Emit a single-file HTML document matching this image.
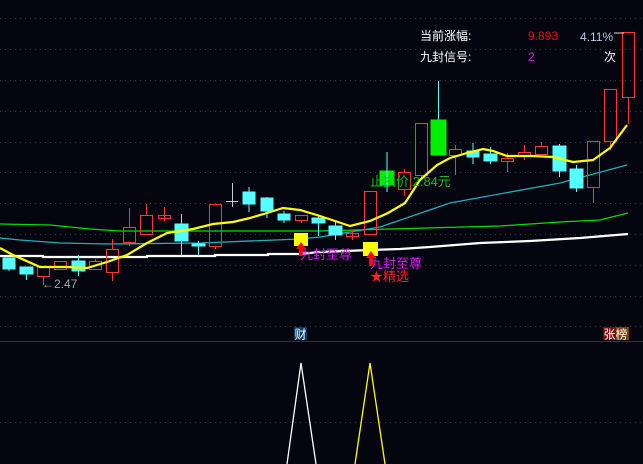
<!DOCTYPE html><html><head><meta charset="utf-8"><style>
body{margin:0;background:#04050f;width:643px;height:464px;overflow:hidden}
svg{display:block}
text{font-family:"Liberation Sans","Noto Sans CJK SC",sans-serif}
</style></head><body>
<svg width="643" height="464" viewBox="0 0 643 464">
<rect width="643" height="464" fill="#04050f"/>
<g stroke="#3a3a3a" stroke-dasharray="1,4" stroke-width="1">
<line x1="0" y1="18.5" x2="643" y2="18.5"/><line x1="0" y1="49.5" x2="643" y2="49.5"/><line x1="0" y1="80.5" x2="643" y2="80.5"/><line x1="0" y1="111.5" x2="643" y2="111.5"/><line x1="0" y1="142.5" x2="643" y2="142.5"/><line x1="0" y1="172.5" x2="643" y2="172.5"/><line x1="0" y1="203.5" x2="643" y2="203.5"/><line x1="0" y1="234.5" x2="643" y2="234.5"/><line x1="0" y1="265.5" x2="643" y2="265.5"/><line x1="0" y1="296.5" x2="643" y2="296.5"/><line x1="0" y1="326.5" x2="643" y2="326.5"/><line x1="0" y1="422.5" x2="643" y2="422.5"/>
</g>
<line x1="0" y1="341.5" x2="643" y2="341.5" stroke="#333" stroke-width="1"/>
<!-- MAs -->
<polyline fill="none" stroke="#00e000" stroke-width="1.3" points="0,224 50,225 90,229 120,231 180,231 320,231 390,229 500,226 560,222 600,220 628,213"/>
<polyline fill="none" stroke="#1fb0b8" stroke-width="1.3" points="0,238 20,240 60,243 110,244 200,243 300,239 320,237 380,227 450,203 560,183 627,165"/>
<polyline fill="none" stroke="#fff" stroke-width="2.2" points="0,256 43,256 43,257 147,257 147,256 215,256 215,255 268,255 268,254 300,254 320,252 370,250 400,249 430,247 480,243 530,241 580,238 628,234"/>
<!-- candles -->
<g stroke-width="1">
<g stroke="#5ff" fill="#5ff">
<rect x="3" y="258" width="12" height="11"/><line x1="9" y1="269" x2="9" y2="271"/>
<rect x="20" y="267" width="13" height="7"/><line x1="26.5" y1="274" x2="26.5" y2="280"/>
<rect x="72" y="261" width="13" height="10"/><line x1="78.5" y1="255" x2="78.5" y2="276"/>
<rect x="175" y="224" width="13" height="17"/><line x1="181.5" y1="214" x2="181.5" y2="255"/>
<rect x="192" y="244" width="13" height="2"/><line x1="198.5" y1="241" x2="198.5" y2="255"/>
<rect x="243" y="192" width="12" height="12"/><line x1="249" y1="187" x2="249" y2="212"/>
<rect x="261" y="198" width="12" height="13"/><line x1="267" y1="197" x2="267" y2="218"/>
<rect x="278" y="214" width="12" height="6"/><line x1="284" y1="211" x2="284" y2="223"/>
<rect x="312" y="218" width="13" height="5"/><line x1="318.5" y1="215" x2="318.5" y2="236"/>
<rect x="329" y="226" width="13" height="9"/><line x1="335.5" y1="221" x2="335.5" y2="240"/>
<rect x="467" y="151" width="12" height="6"/><line x1="473" y1="143" x2="473" y2="164"/>
<rect x="484" y="154" width="13" height="7"/><line x1="490.5" y1="147" x2="490.5" y2="164"/>
<rect x="553" y="146" width="13" height="25"/><line x1="559.5" y1="144" x2="559.5" y2="177"/>
<rect x="570" y="169" width="13" height="19"/><line x1="576.5" y1="165" x2="576.5" y2="192"/>
</g>
<g stroke="#ff3535" fill="none">
<rect x="37.5" y="266.5" width="12" height="10"/><line x1="43.5" y1="276" x2="43.5" y2="285"/>
<rect x="54.5" y="261.5" width="12" height="8"/>
<rect x="89.5" y="261.5" width="12" height="8"/><line x1="95.5" y1="259" x2="95.5" y2="261"/>
<rect x="106.5" y="249.5" width="12" height="23"/><line x1="112.5" y1="239" x2="112.5" y2="249"/><line x1="112.5" y1="273" x2="112.5" y2="281"/>
<rect x="123.5" y="227.5" width="12" height="15"/><line x1="129.5" y1="208" x2="129.5" y2="227"/><line x1="129.5" y1="243" x2="129.5" y2="246"/>
<rect x="140.5" y="215.5" width="12" height="19"/><line x1="146.5" y1="204" x2="146.5" y2="215"/>
<rect x="158.5" y="215.5" width="12" height="3"/><line x1="164.5" y1="207" x2="164.5" y2="221"/>
<rect x="209.5" y="204.5" width="12" height="42"/><line x1="215.5" y1="247" x2="215.5" y2="249"/>
<rect x="295.5" y="215.5" width="12" height="5"/><line x1="301.5" y1="221" x2="301.5" y2="223"/>
<rect x="346.5" y="233.5" width="12" height="3"/><line x1="352.5" y1="230" x2="352.5" y2="240"/>
<rect x="364.5" y="191.5" width="12" height="43"/>
<rect x="398.5" y="172.5" width="12" height="17"/><line x1="404.5" y1="169" x2="404.5" y2="172"/><line x1="404.5" y1="190" x2="404.5" y2="196"/>
<rect x="415.5" y="123.5" width="12" height="52"/><line x1="421.5" y1="176" x2="421.5" y2="178"/>
<rect x="449.5" y="149.5" width="12" height="6"/><line x1="455.5" y1="145" x2="455.5" y2="149"/><line x1="455.5" y1="156" x2="455.5" y2="175"/>
<rect x="501.5" y="158.5" width="12" height="3"/><line x1="507.5" y1="153" x2="507.5" y2="158"/><line x1="507.5" y1="162" x2="507.5" y2="172"/>
<rect x="518.5" y="152.5" width="12" height="3"/><line x1="524.5" y1="145" x2="524.5" y2="152"/><line x1="524.5" y1="156" x2="524.5" y2="160"/>
<rect x="535.5" y="146.5" width="12" height="8"/><line x1="541.5" y1="142" x2="541.5" y2="146"/>
<rect x="587.5" y="141.5" width="12" height="46"/><line x1="593.5" y1="188" x2="593.5" y2="203"/>
<rect x="604.5" y="89.5" width="12" height="52"/><line x1="610.5" y1="142" x2="610.5" y2="150"/>
<rect x="622.5" y="32.5" width="12" height="65"/><line x1="628.5" y1="98" x2="628.5" y2="124"/>
</g>
<g stroke="#00ee00" fill="#00ee00">
<rect x="380" y="171" width="14" height="14"/><line x1="387" y1="152" x2="387" y2="192" stroke="#5ff"/>
<line x1="438.5" y1="81" x2="438.5" y2="120" stroke="#5ff"/><rect x="431" y="120" width="15" height="35"/>
</g>
<g stroke="#ccc"><line x1="226" y1="201.5" x2="238" y2="201.5"/><line x1="232.5" y1="183" x2="232.5" y2="207"/></g>
</g>
<polyline fill="none" stroke="#ffff00" stroke-width="2.2" points="0,248 13,255 40,267 67,267 87,268 107,262 127,255 147,243 167,233 193,229 213,224 233,222 250,218 267,213 283,208 300,210 320,216 350,226 370,221 388,213 405,203 420,180 437,165 450,158 467,153 483,149 493,151 507,156 533,156 553,157 573,162 593,160 610,148 627,125"/>
<!-- signals -->
<rect x="294" y="233" width="14" height="13" fill="#ffff00"/>
<path d="M301 242 L296 249 L299 249 L299 256 L303 256 L303 249 L306 249Z" fill="#f00"/>
<rect x="363" y="242" width="15" height="14" fill="#ffff00"/>
<path d="M371 251 L366 258 L369 258 L369 266 L373 266 L373 258 L376 258Z" fill="#f00"/>
<g font-size="13">
<text x="300" y="259" fill="#d020e8">九封至尊</text>
<text x="370" y="268" fill="#d020e8">九封至尊</text>
<text x="370" y="281" fill="#ff2020">★精选</text>
<text x="370" y="186" fill="#10c010">止损价:2.84元</text>
<text x="42" y="288" fill="#9aa" font-size="12">←2.47</text>
<text x="420" y="40" fill="#fff" font-size="12">当前涨幅:</text>
<text x="528" y="40" fill="#e01010" font-size="12">9.893</text>
<text x="580" y="41" fill="#b8c8e0" font-size="12">4.11%</text>
<text x="420" y="61" fill="#fff" font-size="12">九封信号:</text>
<text x="528" y="61" fill="#d020e8" font-size="12">2</text>
<text x="604" y="61" fill="#fff" font-size="12">次</text>
</g>
<line x1="614" y1="33" x2="624" y2="33" stroke="#ddd"/>
<!-- bottom -->
<rect x="294" y="327" width="13" height="13" fill="#0a3a70"/>
<text x="294.5" y="338.5" fill="#fff" font-size="12">财</text>
<rect x="603" y="327" width="13" height="13" fill="#7a0808"/>
<rect x="616" y="327" width="13" height="13" fill="#7a4008"/>
<text x="603.5" y="338.5" fill="#fff" font-size="12">张榜</text>
<polyline fill="none" stroke="#fff" stroke-width="1.3" points="287,464 301,363 316,464"/>
<polyline fill="none" stroke="#ffff00" stroke-width="1.3" points="355,464 370,363 385,464"/>
</svg>
</body></html>
